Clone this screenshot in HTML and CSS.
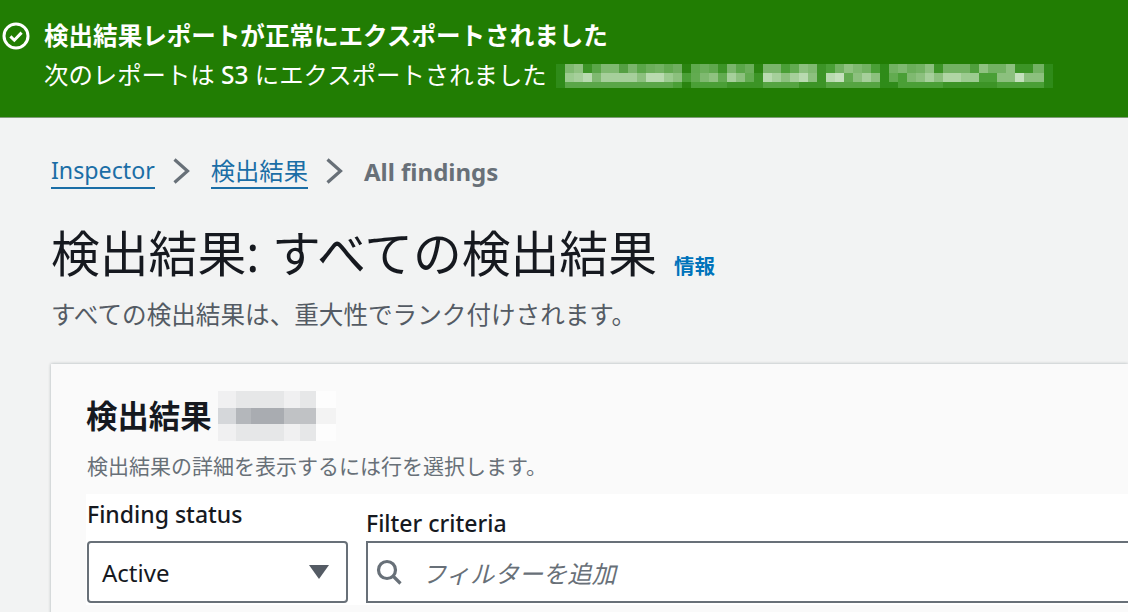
FILE: index.html
```html
<!DOCTYPE html>
<html>
<head>
    <title>Inspector - All findings</title>
    <link rel="stylesheet" href="styles.css">
</head>
<body>
    <div class="flash">
        <svg class="flash-icon" width="28" height="28" viewBox="0 0 28 28">
            <circle cx="14" cy="14" r="12" fill="none" stroke="#fff" stroke-width="3"/>
            <path d="M8.4 14.4l3.9 3.8 7.3-7.6" fill="none" stroke="#fff" stroke-width="3"/>
        </svg>
        <div class="flash-body">
            <div class="flash-title">検出結果レポートが正常にエクスポートされました</div>
            <div class="flash-text">
                <span>次のレポートは <b>S3</b> にエクスポートされました</span>
                <div class="mosaic"><i class="m1"></i><i class="m2"></i><i class="m3"></i></div>
            </div>
        </div>
    </div>

    <div class="page">
        <div class="crumbs">
            <a class="crumb-latin" href="#">Inspector</a>
            <svg width="17" height="26" viewBox="0 0 17 26"><path d="M1.5 1.5l13 11.5-13 11.5" fill="none" stroke="#687078" stroke-width="3.2"/></svg>
            <a href="#">検出結果</a>
            <svg width="17" height="26" viewBox="0 0 17 26"><path d="M1.5 1.5l13 11.5-13 11.5" fill="none" stroke="#687078" stroke-width="3.2"/></svg>
            <span class="current">All findings</span>
        </div>

        <div class="title-row">
            <h1>検出結果: すべての検出結果</h1>
            <a class="info" href="#">情報</a>
        </div>
        <p class="subtitle">すべての検出結果は、重大性でランク付けされます。</p>

        <div class="card">
            <div class="card-head">
                <h2>検出結果</h2>
                <div class="count-blur"></div>
            </div>
            <p class="card-desc">検出結果の詳細を表示するには行を選択します。</p>
            <div class="filters">
                <div class="field status">
                    <label>Finding status</label>
                    <div class="select">
                        <span>Active</span>
                        <svg width="20" height="14" viewBox="0 0 20 14"><path d="M0 0h20L10 14z" fill="#545b64"/></svg>
                    </div>
                </div>
                <div class="field criteria">
                    <label>Filter criteria</label>
                    <div class="search">
                        <svg width="26" height="26" viewBox="0 0 26 26">
                            <circle cx="11" cy="11" r="8.5" fill="none" stroke="#687078" stroke-width="3.2"/>
                            <path d="M17 17l7.5 7.5" fill="none" stroke="#687078" stroke-width="3.2"/>
                        </svg>
                        <span>フィルターを追加</span>
                    </div>
                </div>
            </div>
        </div>
    </div>
</body>
</html>
```
FILE: styles.css
```css
* { box-sizing: border-box; }
html, body { margin: 0; height: 612px; overflow: hidden; }
body {
    background: #f2f3f3;
    color: #16191f;
    font-family: "Noto Sans", "Noto Sans CJK JP", sans-serif;
}

/* flash bar */
.flash {
    height: 118px;
    background: #217d03;
    border-bottom: 1px solid #7f9c78;
    color: #fff;
    display: flex;
    padding: 22px 0 0 2px;
}
.flash-icon { flex: none; margin-right: 14px; }
.flash-body { flex: 1; }
.flash-title { font-size: 24.55px; font-weight: 700; line-height: 28px; }
.flash-text { display: flex; align-items: center; font-size: 24.4px; line-height: 36px; margin-top: 7px; }
.flash-text b { font-weight: 500; }

/* blurred report path, one stop per mosaic cell */
.mosaic {
    width: 497px;
    margin: 2px 0 0 9px;
    padding: 0 9px;
    background: #2f8b19;
}
.mosaic i { display: block; }
.mosaic .m1 {
    height: 9px;
    background: linear-gradient(90deg,
        #7fb970 0 9px, #8fc280 0 18px, #3c9426 0 27px, #5aa648 0 36px, #7fb970 0 54px, #559f43 0 63px,
        #7ab56b 0 72px, #5aa648 0 81px, #6bae5a 0 90px, #72b262 0 99px, #62a950 0 108px, #6fae5f 0 117px,
        #2a8410 0 126px, #5faa4d 0 135px, #6bae5a 0 144px, #5fa84d 0 153px, #3c9426 0 162px, #7ab56b 0 171px,
        #5aa648 0 180px, #6bae5a 0 189px, #2a8410 0 198px, #7ab56b 0 216px, #4a9f36 0 225px, #62ab50 0 234px,
        #8cc07e 0 243px, #7fb970 0 252px, #3c9426 0 261px, #4a9f36 0 270px, #72b262 0 279px, #8fc280 0 288px,
        #7fb970 0 297px, #72b262 0 306px, #4a9f36 0 315px, #2f8b19 0 324px, #72b262 0 333px, #7fb970 0 342px,
        #6bae5a 0 351px, #72b262 0 360px, #8cc07e 0 369px, #3c9426 0 378px, #72b262 0 405px, #4f9f3c 0 414px,
        #8fc280 0 423px, #72b262 0 441px, #8cc07e 0 450px, #3c9426 0 468px, #72b262 0 479px);
}
.mosaic .m2 {
    height: 9px;
    background: linear-gradient(90deg,
        #9ccb90 0 9px, #a6cf9b 0 18px, #b9dab0 0 27px, #7fb970 0 36px, #a6cf9b 0 72px, #8cc07e 0 81px,
        #b9dab0 0 99px, #9ccb90 0 108px, #8cc07e 0 117px, #4a9f36 0 126px, #62ab50 0 135px, #7fb970 0 144px,
        #8fc280 0 153px, #62ab50 0 162px, #a6cf9b 0 171px, #8cc07e 0 180px, #62ab50 0 189px, #3c9426 0 198px,
        #b9dab0 0 207px, #a6cf9b 0 216px, #8cc07e 0 225px, #a6cf9b 0 234px, #b9dab0 0 243px, #8cc07e 0 252px,
        #3c9426 0 261px, #b9dab0 0 270px, #c5e0bd 0 279px, #62ab50 0 288px, #8cc07e 0 297px, #a6cf9b 0 306px,
        #8cc07e 0 315px, #2f8b19 0 324px, #62ab50 0 333px, #4a9f36 0 342px, #7fb970 0 351px, #8cc07e 0 360px,
        #a6cf9b 0 369px, #8cc07e 0 378px, #b0d5a5 0 396px, #9ccb90 0 414px, #4a9f36 0 432px, #8cc07e 0 450px,
        #c5e0bd 0 459px, #8cc07e 0 479px);
}
.mosaic .m3 {
    height: 6px;
    background: linear-gradient(90deg,
        #5aa648 0 108px, #4a9f36 0 117px, #2a8410 0 126px, #4a9f36 0 162px, #3c9426 0 198px, #55a441 0 234px,
        #3c9426 0 261px, #55a441 0 315px, #2f8b19 0 333px, #4a9f36 0 378px, #3c9426 0 432px, #4a9f36 0 479px);
}

.page { padding: 35px 0 0 51px; }

/* breadcrumbs */
.crumbs { display: flex; align-items: center; height: 36px; font-size: 24.3px; }
.crumbs a { color: #1b6ea6; text-decoration: none; border-bottom: 2px solid #1b6ea6; line-height: 33px; margin-right: 18px; }
.crumbs svg { margin-right: 21px; }
.crumbs .crumb-latin { font-size: 23.2px; }
.crumbs .current { color: #687078; font-weight: 700; font-size: 24px; }

.title-row { display: flex; align-items: flex-end; margin-top: 34px; }
h1 { margin: 0; font-size: 48.8px; font-weight: 400; line-height: 60px; }
.info { color: #0073bb; font-size: 20.5px; font-weight: 700; text-decoration: none; margin: 0 0 3px 17px; }
.subtitle { margin: 14px 0 0; font-size: 24.6px; line-height: 36px; color: #545b64; }

/* findings card */
.card {
    margin: 31px 0 0 0;
    height: 300px;
    background: #fafafa;
    box-shadow: 0 0 3px rgba(0, 28, 36, 0.3);
    padding: 27px 0 0 35px;
}
.card-head { display: flex; align-items: center; height: 50px; }
h2 { margin: 0; font-size: 31.4px; font-weight: 700; line-height: 50px; }
.count-blur {
    width: 118px;
    height: 50px;
    margin-left: 6px;
    background:
        linear-gradient(90deg, #d5d7da 0 18px, #b4b7bb 0 33px, #a9acb1 0 66px, #c0c2c5 0 98px, #f3f3f3 0 118px) 0 17px / 100% 16px no-repeat,
        linear-gradient(90deg, #f0f0f1 0 18px, #e6e7e8 0 66px, #f0f0f1 0 82px, #e6e7e8 0 98px, #fdfdfd 0 118px);
}
.card-desc { margin: 11px 0 0 1px; font-size: 21px; line-height: 28px; color: #687078; }

.filters { display: flex; align-items: flex-end; gap: 18px; margin-top: 14px; padding: 0 0 2px 1px; background: #fff; height: 111px; }
.field { display: flex; flex-direction: column; }
.field label { font-size: 23px; line-height: 34px; font-weight: 500; margin-bottom: 1px; }
.status { width: 261px; }
.status label { margin-bottom: 10px; }
.criteria { flex: 1; }
.select, .search {
    height: 62px;
    border: 2px solid #687078;
    border-radius: 4px;
    background: #fff;
    display: flex;
    align-items: center;
    font-size: 24px;
}
.select { justify-content: space-between; padding: 0 17px 0 13px; }
.search { border-right: 0; border-radius: 0; padding-left: 8px; gap: 20px; }
.search span { color: #687078; font-size: 24.3px; font-style: italic; }
```
